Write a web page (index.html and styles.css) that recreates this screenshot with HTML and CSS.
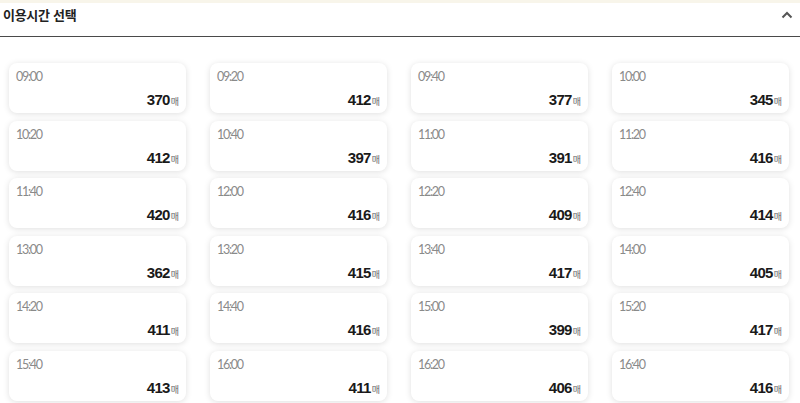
FILE: index.html
```html
<!DOCTYPE html>
<html lang="ko">
<head>
<meta charset="utf-8">
<link rel="stylesheet" href="styles.css">
</head>
<body>
<div class="topstrip"></div>
<header class="head">
  <h2 class="title">이용시간 선택</h2>
  <svg class="chev" width="12" height="8" viewBox="0 0 12 8"><path d="M1.5 6.5 L6 2 L10.5 6.5" fill="none" stroke="#555" stroke-width="2"/></svg>
</header>
<main class="grid">
  <div class="card"><div class="time">09:00</div><div class="cnt"><b>370</b><span>매</span></div></div>
  <div class="card"><div class="time">09:20</div><div class="cnt"><b>412</b><span>매</span></div></div>
  <div class="card"><div class="time">09:40</div><div class="cnt"><b>377</b><span>매</span></div></div>
  <div class="card"><div class="time">10:00</div><div class="cnt"><b>345</b><span>매</span></div></div>
  <div class="card"><div class="time">10:20</div><div class="cnt"><b>412</b><span>매</span></div></div>
  <div class="card"><div class="time">10:40</div><div class="cnt"><b>397</b><span>매</span></div></div>
  <div class="card"><div class="time">11:00</div><div class="cnt"><b>391</b><span>매</span></div></div>
  <div class="card"><div class="time">11:20</div><div class="cnt"><b>416</b><span>매</span></div></div>
  <div class="card"><div class="time">11:40</div><div class="cnt"><b>420</b><span>매</span></div></div>
  <div class="card"><div class="time">12:00</div><div class="cnt"><b>416</b><span>매</span></div></div>
  <div class="card"><div class="time">12:20</div><div class="cnt"><b>409</b><span>매</span></div></div>
  <div class="card"><div class="time">12:40</div><div class="cnt"><b>414</b><span>매</span></div></div>
  <div class="card"><div class="time">13:00</div><div class="cnt"><b>362</b><span>매</span></div></div>
  <div class="card"><div class="time">13:20</div><div class="cnt"><b>415</b><span>매</span></div></div>
  <div class="card"><div class="time">13:40</div><div class="cnt"><b>417</b><span>매</span></div></div>
  <div class="card"><div class="time">14:00</div><div class="cnt"><b>405</b><span>매</span></div></div>
  <div class="card"><div class="time">14:20</div><div class="cnt"><b>411</b><span>매</span></div></div>
  <div class="card"><div class="time">14:40</div><div class="cnt"><b>416</b><span>매</span></div></div>
  <div class="card"><div class="time">15:00</div><div class="cnt"><b>399</b><span>매</span></div></div>
  <div class="card"><div class="time">15:20</div><div class="cnt"><b>417</b><span>매</span></div></div>
  <div class="card"><div class="time">15:40</div><div class="cnt"><b>413</b><span>매</span></div></div>
  <div class="card"><div class="time">16:00</div><div class="cnt"><b>411</b><span>매</span></div></div>
  <div class="card"><div class="time">16:20</div><div class="cnt"><b>406</b><span>매</span></div></div>
  <div class="card"><div class="time">16:40</div><div class="cnt"><b>416</b><span>매</span></div></div>
</main>
</body>
</html>
```
FILE: styles.css
```css
* { box-sizing: border-box; }
html, body { margin: 0; padding: 0; background: #fff; }
body {
  font-family: "Noto Sans CJK KR", "Noto Sans", sans-serif;
  width: 800px;
  height: 403px;
  overflow: hidden;
}
.topstrip { height: 3px; background: #f8f5ea; }
.head {
  height: 34px;
  border-bottom: 1.5px solid #4a4a4a;
  display: flex;
  align-items: flex-start;
  justify-content: space-between;
  padding: 0 7px 0 3px;
}
.title {
  margin: 0;
  padding-top: 2px;
  font-size: 13px;
  font-weight: 700;
  color: #222;
  letter-spacing: -0.3px;
  line-height: 20px;
}
.chev { margin-top: 8px; }
.grid {
  display: grid;
  grid-template-columns: repeat(4, 177px);
  column-gap: 24px;
  row-gap: 7.6px;
  padding: 26px 0 0 9px;
}
.card {
  height: 50px;
  background: #fff;
  border-radius: 8px;
  box-shadow: 0 1px 6px rgba(0,0,0,0.13);
  padding: 6px 7px 0 7px;
  display: flex;
  flex-direction: column;
  justify-content: space-between;
}
.time {
  font-family: "Lato", "Liberation Sans", sans-serif;
  font-size: 12.5px;
  color: #8a8a8a;
  letter-spacing: -1.3px;
  line-height: 16px;
}
.cnt {
  text-align: right;
  line-height: 18px;
  padding-bottom: 2px;
}
.cnt b {
  font-family: "Liberation Sans", Arial, sans-serif;
  font-weight: 700;
  font-size: 15px;
  color: #1a1a1a;
  letter-spacing: -0.7px;
}
.cnt span {
  font-size: 9px;
  color: #666;
  margin-left: 1px;
}
```
